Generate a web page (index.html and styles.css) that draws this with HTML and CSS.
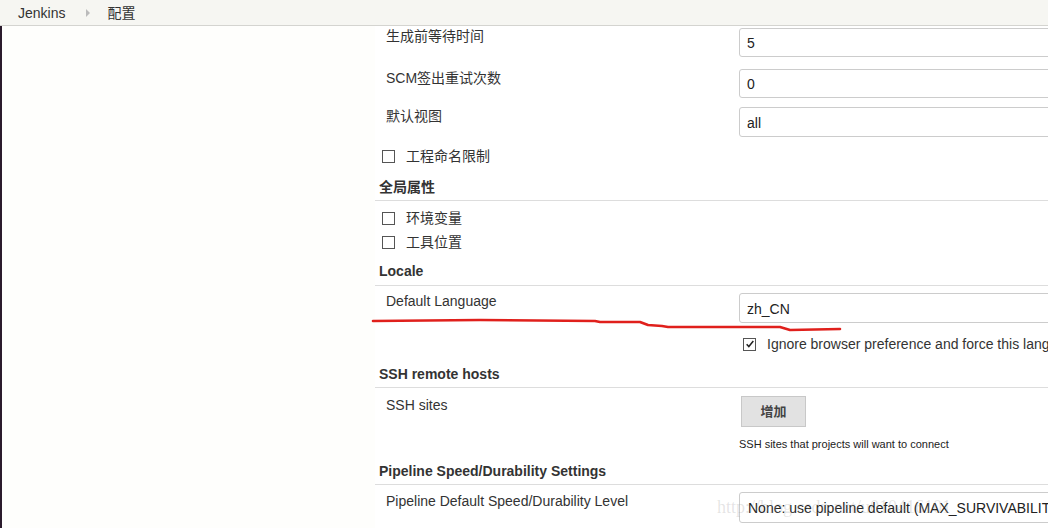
FILE: index.html
```html
<!DOCTYPE html>
<html lang="zh-CN">
<head>
<meta charset="utf-8">
<title>配置 [Jenkins]</title>
<link rel="stylesheet" href="styles.css">
</head>
<body>
<div class="crumbs">
  <span class="crumb">Jenkins</span>
  <span class="sep"></span>
  <span class="crumb">配置</span>
</div>
<div class="page">
  <div class="sidebar"></div>
  <div class="main">
    <div class="row r1">
      <div class="label">生成前等待时间</div>
      <div class="field"><div class="input">5</div></div>
    </div>
    <div class="row r2">
      <div class="label l1">SCM签出重试次数</div>
      <div class="field"><div class="input">0</div></div>
    </div>
    <div class="row r3">
      <div class="label l1">默认视图</div>
      <div class="field"><div class="input tall">all</div></div>
    </div>
    <div class="check c1"><span class="box"></span><span>工程命名限制</span></div>

    <div class="section s1">全局属性</div>
    <div class="check c2"><span class="box"></span><span>环境变量</span></div>
    <div class="check c3"><span class="box"></span><span>工具位置</span></div>

    <div class="section s2">Locale</div>
    <div class="row r4">
      <div class="label">Default Language</div>
      <div class="field"><div class="input tall">zh_CN</div></div>
    </div>
    <div class="row r5">
      <div class="label"></div>
      <div class="field"><div class="check inline"><span class="box checked"><svg viewBox="0 0 12 12" width="10" height="10"><path d="M2 6.2 L4.6 9 L10 2.5" fill="none" stroke="#222" stroke-width="1.8"/></svg></span><span>Ignore browser preference and force this language to all users</span></div></div>
    </div>

    <div class="section s3">SSH remote hosts</div>
    <div class="row r6">
      <div class="label l1">SSH sites</div>
      <div class="field">
        <div class="button">增加</div>
        <div class="help">SSH sites that projects will want to connect</div>
      </div>
    </div>

    <div class="section s4">Pipeline Speed/Durability Settings</div>
    <div class="row r7">
      <div class="label l1">Pipeline Default Speed/Durability Level</div>
      <div class="field"><div class="input select">None: use pipeline default (MAX_SURVIVABILITY)</div></div>
    </div>
  </div>
</div>
<svg class="redline" width="1048" height="528" viewBox="0 0 1048 528">
  <path d="M373 321 L480 320 L595 321 L600 322 L640 322 L648 325 L662 326 L668 327 L780 327 L790 330 L840 329" fill="none" stroke="#e0201c" stroke-width="2.6" stroke-linecap="round" stroke-linejoin="round"/>
</svg>
<div class="watermark">http://blog.csdn.net/u010416101</div>
</body>
</html>
```

FILE: styles.css
```css
html, body {
  margin: 0;
  padding: 0;
  background: #ffffff;
  overflow: hidden;
  width: 1048px;
  height: 528px;
}
body {
  font-family: "Liberation Sans", Arial, "Noto Sans CJK SC", sans-serif;
  font-size: 14px;
  color: #333333;
  position: relative;
}
.crumbs {
  height: 25px;
  border-bottom: 1px solid #d4d4d0;
  background: #f6f6f2;
  display: flex;
  align-items: center;
  padding-left: 18px;
  box-sizing: content-box;
}
.crumb {
  color: #333;
  line-height: 16px;
}
.sep {
  width: 0;
  height: 0;
  border-left: 4px solid #bbbbbb;
  border-top: 4px solid transparent;
  border-bottom: 4px solid transparent;
  margin: 0 17px 0 21px;
}
.page {
  display: flex;
  height: 502px;
}
.sidebar {
  width: 373px;
  flex: none;
  border-left: 2px solid #2a1b2c;
  background: #fefefc;
}
.main {
  flex: 1;
  min-width: 0;
  overflow: hidden;
}
.row {
  display: grid;
  grid-template-columns: 364px 1fr;
}
.label {
  padding-left: 11px;
  line-height: 16px;
  white-space: nowrap;
}
.l1 { padding-top: 1px; }
.field { min-width: 0; }
.input {
  width: 420px;
  height: 27px;
  border: 1px solid #cccccc;
  border-radius: 3px 0 0 3px;
  box-sizing: content-box;
  padding-left: 7px;
  line-height: 29px;
  font-size: 14px;
  color: #222;
  white-space: nowrap;
  overflow: hidden;
  background: #fff;
}
.input.tall { height: 28px; line-height: 30px; }
.input.select { height: 29px; line-height: 30px; padding-left: 8px; }
.r1 { margin-top: 2px; }
.r2 { margin-top: 12px; }
.r3 { margin-top: 9px; }
.check {
  display: flex;
  align-items: center;
  line-height: 20px;
  height: 20px;
  padding-left: 7px;
  white-space: nowrap;
}
.check .box {
  width: 11px;
  height: 11px;
  border: 1px solid #555;
  background: #fff;
  margin-right: 11px;
  flex: none;
  display: flex;
  align-items: center;
  justify-content: center;
}
.check.inline { padding-left: 4px; }
.c1 { margin-top: 9px; }
.c2 { margin-top: 7px; }
.c3 { margin-top: 4px; }
.section {
  font-weight: bold;
  line-height: 18px;
  padding-left: 4px;
  padding-bottom: 4px;
  border-bottom: 1px solid #dddddd;
  margin-right: 0;
}
.s1 { margin-top: 12px; }
.s2 { margin-top: 10px; padding-bottom: 5px; }
.s3 { margin-top: 11px; }
.s4 { margin-top: 11px; }
.r4 { margin-top: 7px; }
.r5 { margin-top: 11px; }
.r6 { margin-top: 8px; }
.button {
  margin-left: 2px;
  width: 63px;
  height: 29px;
  border: 1px solid #c8c8c8;
  background: #e2e2e2;
  text-align: center;
  line-height: 29px;
  font-size: 13px;
  font-weight: bold;
  color: #444;
}
.help {
  margin-top: 10px;
  font-size: 11px;
  line-height: 14px;
  white-space: nowrap;
  color: #222;
}
.r7 { margin-top: 7px; }
.redline {
  position: absolute;
  left: 0;
  top: 0;
  pointer-events: none;
}
.watermark {
  position: absolute;
  left: 717px;
  top: 497px;
  font-family: "Liberation Serif", serif;
  font-size: 18px;
  color: rgba(160, 160, 160, 0.28);
  white-space: nowrap;
  pointer-events: none;
}
```
